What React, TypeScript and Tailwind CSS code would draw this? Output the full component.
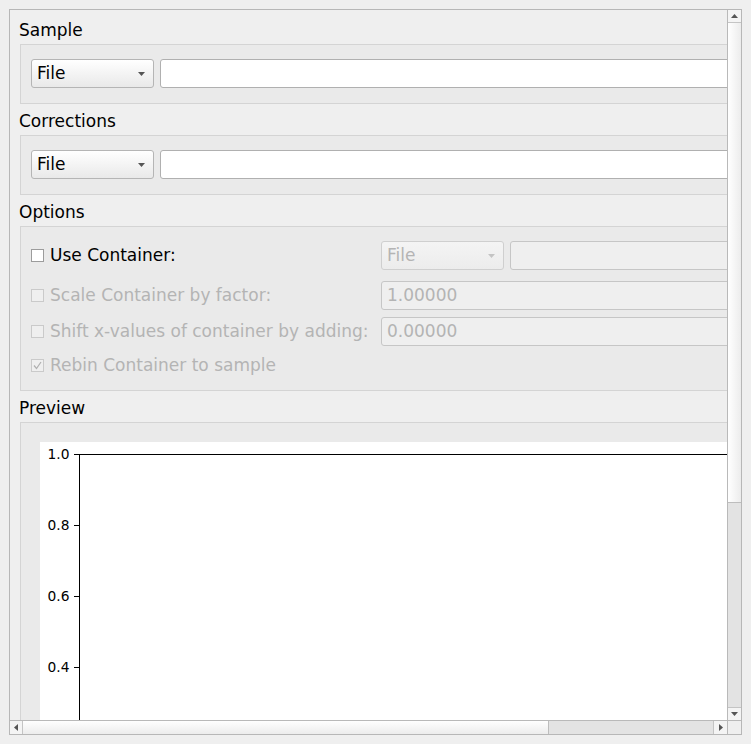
import React from 'react';

const font = { fontFamily: '"DejaVu Sans", Verdana, sans-serif' };

const Arrow: React.FC<{ dir: 'up' | 'down' | 'left' | 'right'; color?: string }> = ({ dir, color = '#555' }) => {
  const pts = {
    up: '0,4 7,4 3.5,0',
    down: '0,0 7,0 3.5,4',
    left: '4,0 4,7 0,3.5',
    right: '0,0 0,7 4,3.5',
  }[dir];
  const w = dir === 'up' || dir === 'down' ? 7 : 4;
  const h = dir === 'up' || dir === 'down' ? 4 : 7;
  return (
    <svg width={w} height={h} viewBox={`0 0 ${w} ${h}`}>
      <polygon points={pts} fill={color} />
    </svg>
  );
};

const Combo: React.FC<{ disabled?: boolean }> = ({ disabled }) => (
  <div
    className={`w-[123px] h-[29px] shrink-0 rounded-[3px] border flex items-center justify-between pl-[5px] pr-[8px] ${
      disabled
        ? 'border-[#cfcfcf] bg-gradient-to-b from-[#f4f4f4] to-[#ececec] text-[#b4b4b4]'
        : 'border-[#b5b5b5] bg-gradient-to-b from-white to-[#e9e9e9] text-black'
    }`}
  >
    <span className="text-[17px] leading-none">File</span>
    <Arrow dir="down" color={disabled ? '#c4c4c4' : '#555'} />
  </div>
);

const TextBox: React.FC<{ disabled?: boolean; value?: string; className?: string }> = ({ disabled, value, className }) => (
  <div
    className={`h-[29px] rounded-[3px] border flex items-center px-[5px] text-[17px] ${
      disabled ? 'border-[#c6c6c6] bg-[#efefef] text-[#b4b4b4]' : 'border-[#b0b0b0] bg-white text-black'
    } ${className ?? ''}`}
  >
    {value}
  </div>
);

const Check: React.FC<{ disabled?: boolean; checked?: boolean }> = ({ disabled, checked }) => (
  <div
    className={`w-[13px] h-[13px] shrink-0 border flex items-center justify-center ${
      disabled ? 'border-[#cacaca] bg-[#efefef]' : 'border-[#9c9c9c] bg-white'
    }`}
  >
    {checked && (
      <svg width="9" height="9" viewBox="0 0 9 9">
        <path d="M1 4.5 L3.5 7.5 L8 1" stroke="#b0b0b0" strokeWidth="1.2" fill="none" />
      </svg>
    )}
  </div>
);

const SectionLabel: React.FC<{ children: React.ReactNode; top: string }> = ({ children, top }) => (
  <div className={`h-[20px] leading-[20px] text-[17px] text-black pl-[9px] mb-[4px] ${top}`}>{children}</div>
);

const Plot: React.FC = () => {
  const ticks = [
    { y: 12, label: '1.0' },
    { y: 83, label: '0.8' },
    { y: 154, label: '0.6' },
    { y: 225, label: '0.4' },
  ];
  return (
    <svg width="900" height="300" className="block bg-white">
      <line x1="39.5" y1="12.5" x2="900" y2="12.5" stroke="#000" strokeWidth="1" />
      <line x1="39.5" y1="12" x2="39.5" y2="300" stroke="#000" strokeWidth="1" />
      {ticks.map(t => (
        <g key={t.label}>
          <line x1="34" y1={t.y + 0.5} x2="39" y2={t.y + 0.5} stroke="#000" strokeWidth="1" />
          <text x="29.5" y={t.y + 5} textAnchor="end" fontSize="13.8" fill="#000" style={font}>
            {t.label}
          </text>
        </g>
      ))}
    </svg>
  );
};

const App: React.FC = () => {
  return (
    <div className="w-[751px] h-[744px] bg-[#efefef] pt-[9px] pl-[9px] overflow-hidden" style={font}>
      <div className="w-[733px] h-[726px] border border-[#b7b7b7] grid grid-cols-[717px_14px] grid-rows-[710px_14px]">
        {/* Scroll content */}
        <div className="overflow-hidden bg-[#efefef]">
          <div className="w-[940px] pt-[10px]">
            <SectionLabel top="">Sample</SectionLabel>
            <div className="ml-[10px] h-[60px] border border-[#d4d4d4] bg-[#eaeaea] pl-[10px] pt-[14px] flex items-start">
              <Combo />
              <TextBox className="ml-[6px] w-[760px]" />
            </div>

            <SectionLabel top="mt-[7px]">Corrections</SectionLabel>
            <div className="ml-[10px] h-[60px] border border-[#d4d4d4] bg-[#eaeaea] pl-[10px] pt-[14px] flex items-start">
              <Combo />
              <TextBox className="ml-[6px] w-[760px]" />
            </div>

            <SectionLabel top="mt-[7px]">Options</SectionLabel>
            <div className="ml-[10px] h-[165px] border border-[#d4d4d4] bg-[#eaeaea] pl-[10px] pt-[14px] flex flex-col">
              <div className="h-[29px] flex items-center">
                <div className="w-[350px] flex items-center gap-[6px]">
                  <Check />
                  <span className="text-[17px] text-black">Use Container:</span>
                </div>
                <Combo disabled />
                <TextBox disabled className="ml-[6px] w-[400px]" />
              </div>
              <div className="h-[29px] mt-[11px] flex items-center">
                <div className="w-[350px] flex items-center gap-[6px]">
                  <Check disabled />
                  <span className="text-[17px] text-[#b4b4b4]">Scale Container by factor:</span>
                </div>
                <TextBox disabled value="1.00000" className="w-[540px]" />
              </div>
              <div className="h-[29px] mt-[7px] flex items-center">
                <div className="w-[350px] flex items-center gap-[6px]">
                  <Check disabled />
                  <span className="text-[17px] text-[#b4b4b4]">Shift x-values of container by adding:</span>
                </div>
                <TextBox disabled value="0.00000" className="w-[540px]" />
              </div>
              <div className="h-[29px] mt-[5px] flex items-center">
                <div className="flex items-center gap-[6px]">
                  <Check disabled checked />
                  <span className="text-[17px] text-[#b4b4b4]">Rebin Container to sample</span>
                </div>
              </div>
            </div>

            <SectionLabel top="mt-[7px]">Preview</SectionLabel>
            <div className="ml-[10px] h-[320px] border border-[#d4d4d4] bg-[#eaeaea] pl-[19px] pt-[19px]">
              <Plot />
            </div>
          </div>
        </div>

        {/* Vertical scrollbar */}
        <div className="border-l border-[#b9b9b9] flex flex-col">
          <div className="h-[13px] shrink-0 border-b border-[#c4c4c4] bg-[#f4f4f4] flex items-center justify-center">
            <Arrow dir="up" />
          </div>
          <div className="h-[480px] shrink-0 border-b border-[#bdbdbd] bg-gradient-to-r from-white to-[#ececec]" />
          <div className="flex-1 bg-[#e3e3e3]" />
          <div className="h-[13px] shrink-0 border-t border-[#c4c4c4] bg-[#f4f4f4] flex items-center justify-center">
            <Arrow dir="down" />
          </div>
        </div>

        {/* Horizontal scrollbar */}
        <div className="border-t border-[#b9b9b9] flex">
          <div className="w-[13px] shrink-0 border-r border-[#c4c4c4] bg-[#f4f4f4] flex items-center justify-center">
            <Arrow dir="left" />
          </div>
          <div className="w-[526px] shrink-0 border-r border-[#bdbdbd] bg-gradient-to-b from-white to-[#ececec]" />
          <div className="flex-1 bg-[#e3e3e3]" />
          <div className="w-[14px] shrink-0 border-l border-[#c4c4c4] bg-[#f4f4f4] flex items-center justify-center">
            <Arrow dir="right" />
          </div>
        </div>

        {/* Corner */}
        <div className="border-l border-t border-[#b9b9b9] bg-[#efefef]" />
      </div>
    </div>
  );
};

export default App;
